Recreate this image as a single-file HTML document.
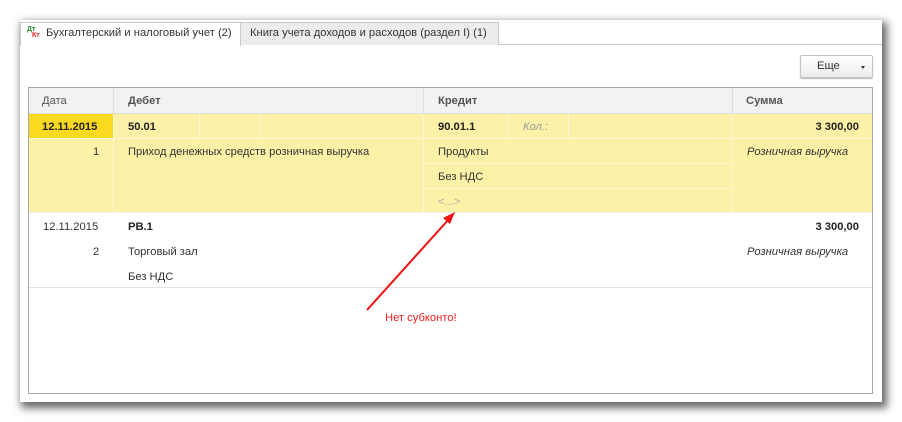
<!DOCTYPE html>
<html><head><meta charset="utf-8"><style>
body{margin:0;width:902px;height:422px;background:#fff;position:relative;overflow:hidden;font-family:"Liberation Sans",Arial,sans-serif;font-size:11.2px;color:#333}
.a{position:absolute}
.panel{left:20px;top:20px;width:862px;height:382px;background:#fff;box-shadow:3px 4px 8px 2px rgba(0,0,0,.6)}
.t{position:absolute;white-space:nowrap}
.b{font-weight:bold}
</style></head><body>
<div class="a panel"></div>
<!-- tabs -->
<div class="a" style="left:20px;top:44px;width:862px;height:1px;background:#c8c8c8"></div>
<div class="a" style="left:20px;top:22px;width:219px;height:23px;background:#fff;border:1px solid #c8c8c8;border-bottom:none"></div>
<div class="t" style="left:27px;top:26px;font-size:7px;color:#2a8a2a;font-weight:bold">Дт</div>
<div class="t" style="left:32px;top:32px;font-size:7px;color:#e02020;font-weight:bold">Кт</div>
<div class="t" style="left:46px;top:27px">Бухгалтерский и налоговый учет (2)</div>
<div class="a" style="left:240px;top:22px;width:257px;height:22px;background:#ececec;border:1px solid #c8c8c8;border-bottom:none"></div>
<div class="t" style="left:250px;top:27px">Книга учета доходов и расходов (раздел I) (1)</div>
<!-- button -->
<div class="a" style="left:800px;top:55px;width:71px;height:21px;border:1px solid #c4c4c4;border-radius:2px;background:linear-gradient(#fff,#ececec);box-shadow:0 1px 1px #bbb"></div>
<div class="t" style="left:817px;top:60px">Еще</div>
<div class="a" style="left:861px;top:66px;width:0;height:0;border-left:2px solid transparent;border-right:2px solid transparent;border-top:3px solid #333"></div>
<!-- table -->
<div class="a" style="left:28px;top:87px;width:843px;height:305px;border:1px solid #a8a8a8;background:#fff"></div>
<div class="a" style="left:29px;top:88px;width:843px;height:25px;background:#f2f2f2;border-bottom:1px solid #ddd"></div>
<div class="a" style="left:113px;top:88px;width:1px;height:25px;background:#ddd"></div>
<div class="a" style="left:423px;top:88px;width:1px;height:25px;background:#ddd"></div>
<div class="a" style="left:732px;top:88px;width:1px;height:25px;background:#ddd"></div>
<div class="t" style="left:42px;top:95px;color:#555">Дата</div>
<div class="t b" style="left:128px;top:95px;color:#555">Дебет</div>
<div class="t b" style="left:438px;top:95px;color:#555">Кредит</div>
<div class="t b" style="left:746px;top:95px;color:#555">Сумма</div>
<!-- yellow group -->
<div class="a" style="left:29px;top:114px;width:843px;height:98px;background:#fdf1a7"></div>
<div class="a" style="left:29px;top:114px;width:84px;height:24px;background:#fada21"></div>
<div class="a" style="left:29px;top:138px;width:843px;height:1px;background:#fff8d6"></div>
<div class="a" style="left:113px;top:114px;width:1px;height:98px;background:#fff8d6"></div>
<div class="a" style="left:199px;top:114px;width:1px;height:24px;background:#fff8d6"></div>
<div class="a" style="left:259px;top:114px;width:1px;height:24px;background:#fff8d6"></div>
<div class="a" style="left:423px;top:114px;width:1px;height:98px;background:#fff8d6"></div>
<div class="a" style="left:508px;top:114px;width:1px;height:24px;background:#fff8d6"></div>
<div class="a" style="left:568px;top:114px;width:1px;height:24px;background:#fff8d6"></div>
<div class="a" style="left:732px;top:114px;width:1px;height:98px;background:#fff8d6"></div>
<div class="a" style="left:423px;top:163px;width:309px;height:1px;background:#fff8d6"></div>
<div class="a" style="left:423px;top:188px;width:309px;height:1px;background:#fff8d6"></div>
<div class="t b" style="left:42px;top:121px;color:#222">12.11.2015</div>
<div class="t b" style="left:128px;top:121px;color:#222">50.01</div>
<div class="t b" style="left:438px;top:121px;color:#222">90.01.1</div>
<div class="t" style="left:523px;top:121px;color:#999;font-style:italic">Кол.:</div>
<div class="t b" style="right:43px;top:121px;color:#222">3 300,00</div>
<div class="t" style="left:93px;top:146px">1</div>
<div class="t" style="left:128px;top:146px">Приход денежных средств розничная выручка</div>
<div class="t" style="left:438px;top:146px">Продукты</div>
<div class="t" style="left:747px;top:146px;font-style:italic">Розничная выручка</div>
<div class="t" style="left:438px;top:171px">Без НДС</div>
<div class="t" style="left:438px;top:196px;color:#aaa">&lt;...&gt;</div>
<div class="a" style="left:29px;top:212px;width:843px;height:1px;background:#eee"></div>
<!-- second group -->
<div class="t" style="left:43px;top:221px">12.11.2015</div>
<div class="t b" style="left:128px;top:221px;color:#222">РВ.1</div>
<div class="t b" style="right:43px;top:221px;color:#222">3 300,00</div>
<div class="t" style="left:93px;top:246px">2</div>
<div class="t" style="left:128px;top:246px">Торговый зал</div>
<div class="t" style="left:747px;top:246px;font-style:italic">Розничная выручка</div>
<div class="t" style="left:128px;top:271px">Без НДС</div>
<div class="a" style="left:29px;top:287px;width:843px;height:1px;background:#e2e2e2"></div>
<!-- arrow -->
<svg class="a" style="left:0;top:0" width="902" height="422">
<line x1="367" y1="310" x2="449" y2="219" stroke="#f01010" stroke-width="2"/>
<polygon points="455,212 443,218 450,224" fill="#f01010"/>
</svg>
<div class="t" style="left:385px;top:312px;color:#f02020">Нет субконто!</div>
</body></html>
